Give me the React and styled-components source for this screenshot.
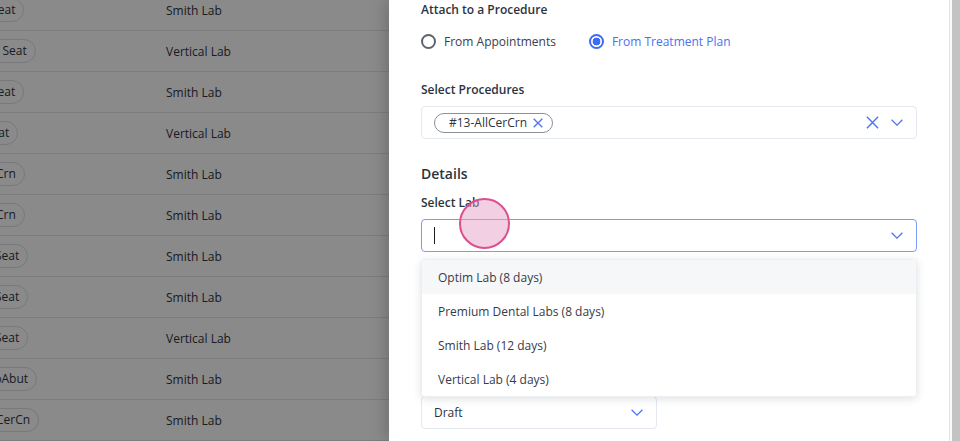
import { useEffect, useRef } from "react";
import styled, { createGlobalStyle } from "styled-components";

const GlobalStyle = createGlobalStyle`
  html, body {
    margin: 0;
    padding: 0;
  }
  body {
    font-family: "Open Sans", "Noto Sans", sans-serif;
    background: #ffffff;
    overflow: hidden;
  }
  * {
    box-sizing: border-box;
  }
`;

// rows of the lab cases table behind the drawer
const cases = [
  { proc: "#14-AllCerCn Seat", lab: "Smith Lab" },
  { proc: "#3-Post & Core Seat", lab: "Vertical Lab" },
  { proc: "#9-Onlay Pre Seat", lab: "Smith Lab" },
  { proc: "#3-Inlay Pre Seat", lab: "Vertical Lab" },
  { proc: "#8-AllCeramic Crn", lab: "Smith Lab" },
  { proc: "#9-AllCeramic Crn", lab: "Smith Lab" },
  { proc: "#12-Crn Build Seat", lab: "Smith Lab" },
  { proc: "#14-Crn Build Seat", lab: "Smith Lab" },
  { proc: "#15-Crn Build Seat", lab: "Vertical Lab" },
  { proc: "#3-Implant ImpAbut", lab: "Smith Lab" },
  { proc: "#3-Ceramic AllCerCn", lab: "Smith Lab" },
  { proc: "#12-Crn Build Seat", lab: "Smith Lab" },
];

const labs = [
  "Optim Lab (8 days)",
  "Premium Dental Labs (8 days)",
  "Smith Lab (12 days)",
  "Vertical Lab (4 days)",
];

const Chevron = ({ size = 12 }) => (
  <svg width={size} height={size * 0.6} viewBox="0 0 12 7" fill="none">
    <path d="M0.6 0.6 L6 6 L11.4 0.6" stroke="#4f74f3" strokeWidth="1.3" />
  </svg>
);

const Cross = ({ size = 12, weight = 1.3 }) => (
  <svg width={size} height={size} viewBox="0 0 12 12" fill="none">
    <path d="M0.8 0.8 L11.2 11.2 M11.2 0.8 L0.8 11.2" stroke="#4f74f3" strokeWidth={weight} />
  </svg>
);

const LabCaseDrawer = () => {
  const tableRef = useRef(null);

  // the table behind is scrolled sideways, like in the app
  useEffect(() => {
    if (tableRef.current) tableRef.current.scrollLeft = 110;
  }, []);

  return (
    <Page>
      <TableScroll ref={tableRef}>
        <Rows>
          {cases.map((c, i) => (
            <Row key={i}>
              <ProcCell>
                <ProcPill>{c.proc}</ProcPill>
              </ProcCell>
              <LabCell>{c.lab}</LabCell>
            </Row>
          ))}
        </Rows>
      </TableScroll>

      <Backdrop />

      <Drawer>
        <DrawerBody>
          <FieldLabel>Attach to a Procedure</FieldLabel>
          <RadioRow>
            <RadioOption>
              <RadioDot />
              From Appointments
            </RadioOption>
            <RadioOption $checked>
              <RadioDot $checked />
              From Treatment Plan
            </RadioOption>
          </RadioRow>

          <FieldLabel>Select Procedures</FieldLabel>
          <SelectBox>
            <Chip>
              #13-AllCerCrn
              <Cross size={10} weight={1.6} />
            </Chip>
            <SelectIcons>
              <Cross size={13} />
              <Chevron />
            </SelectIcons>
          </SelectBox>

          <SectionTitle>Details</SectionTitle>
          <FieldLabel>Select Lab</FieldLabel>
          <LabField>
            <SelectBox $focused>
              <Caret />
              <SelectIcons>
                <Chevron />
              </SelectIcons>
            </SelectBox>
            <Menu>
              {labs.map((l, i) => (
                <MenuItem key={l} $active={i === 0}>
                  {l}
                </MenuItem>
              ))}
            </Menu>
          </LabField>

          <FieldLabel $gap={36}>Due Date</FieldLabel>
          <SelectBox />

          <FieldLabel $gap={25}>Status</FieldLabel>
          <SelectBox $half>
            <SelectValue>Draft</SelectValue>
            <SelectIcons>
              <Chevron />
            </SelectIcons>
          </SelectBox>
        </DrawerBody>
        <ScrollTrack>
          <ScrollThumb />
        </ScrollTrack>
      </Drawer>

      <TouchMark />
    </Page>
  );
};

const Page = styled.div`
  position: relative;
  width: 960px;
  height: 441px;
  overflow: hidden;
  font-size: 12px;
  color: #2c3340;
`;

const TableScroll = styled.div`
  width: 100%;
  height: 100%;
  overflow: hidden;
`;

const Rows = styled.div`
  margin-top: -10px;
  width: 1100px;
`;

const Row = styled.div`
  display: grid;
  grid-template-columns: 260px 1fr;
  align-items: center;
  height: 41px;
  border-bottom: 1px solid #e5e7ed;
`;

const ProcCell = styled.div`
  padding-left: 16px;
  display: flex;
`;

const ProcPill = styled.span`
  border: 1px solid #dcdfe6;
  border-radius: 12px;
  padding: 2px 8px;
  line-height: 18px;
  color: #2f3440;
  white-space: nowrap;
`;

const LabCell = styled.div`
  padding-left: 16px;
  color: #2f3440;
  font-size: 12px;
`;

const Backdrop = styled.div`
  position: absolute;
  inset: 0;
  background: rgba(0, 0, 0, 0.46);
`;

const Drawer = styled.div`
  position: absolute;
  top: 0;
  right: 0;
  bottom: 0;
  width: 571px;
  background: #ffffff;
  display: flex;
  box-shadow: -4px 0 14px rgba(0, 0, 0, 0.18);
`;

const DrawerBody = styled.div`
  flex: 1;
  padding: 1px 32px 0 32px;
  display: flex;
  flex-direction: column;
`;

const ScrollTrack = styled.div`
  width: 11px;
  border-left: 1px solid #e4e4e4;
  background: #fafafa;
  padding-left: 2px;
  display: flex;
`;

const ScrollThumb = styled.div`
  flex: 1;
  background: #c3c3c3;
`;

const FieldLabel = styled.div`
  font-weight: 600;
  font-size: 12px;
  line-height: 18px;
  color: #2c3340;
  margin-top: ${(p) => (p.$gap ? `${p.$gap}px` : "0")};
  margin-bottom: 7px;
`;

const SectionTitle = styled.div`
  font-weight: 600;
  font-size: 14px;
  line-height: 20px;
  color: #2c3340;
  margin-top: 25px;
  margin-bottom: 10px;
`;

const RadioRow = styled.div`
  display: flex;
  align-items: center;
  gap: 33px;
  height: 20px;
  margin-top: 5px;
  margin-bottom: 30px;
`;

const RadioOption = styled.label`
  display: flex;
  align-items: center;
  gap: 8px;
  font-size: 12px;
  color: ${(p) => (p.$checked ? "#4a70f2" : "#39404c")};
`;

const RadioDot = styled.span`
  width: 15px;
  height: 15px;
  border-radius: 50%;
  border: 2px solid ${(p) => (p.$checked ? "#3d6cf4" : "#5d6470")};
  background: ${(p) =>
    p.$checked ? "radial-gradient(circle, #3d6cf4 0 3.6px, #fff 4.2px)" : "#fff"};
`;

const SelectBox = styled.div`
  height: 33px;
  width: ${(p) => (p.$half ? "236px" : "100%")};
  border: 1px solid ${(p) => (p.$focused ? "#7b9bf7" : "#e4e8f0")};
  border-radius: 4px;
  display: flex;
  align-items: center;
  padding: 0 13px 0 12px;
  background: #fff;
`;

const SelectValue = styled.span`
  font-size: 12px;
  color: #2c3340;
`;

const SelectIcons = styled.div`
  margin-left: auto;
  display: flex;
  align-items: center;
  gap: 12px;
`;

const Chip = styled.span`
  display: inline-flex;
  align-items: center;
  gap: 6px;
  height: 20px;
  border: 1px solid #8a919d;
  border-radius: 10px;
  padding: 0 9px 0 14px;
  font-size: 12px;
  color: #2c3340;
`;

const Caret = styled.span`
  width: 1px;
  height: 17px;
  background: #1d1d1d;
`;

const LabField = styled.div`
  position: relative;
`;

const Menu = styled.div`
  position: absolute;
  top: calc(100% + 7px);
  left: 0;
  right: 0;
  background: #fff;
  border-radius: 4px;
  border: 1px solid #eceef2;
  box-shadow: 0 2px 8px rgba(30, 40, 60, 0.14);
  overflow: hidden;
  z-index: 2;
`;

const MenuItem = styled.div`
  height: 34px;
  display: flex;
  align-items: center;
  padding-left: 16px;
  font-size: 12px;
  color: #353c49;
  background: ${(p) => (p.$active ? "#f6f7f9" : "#fff")};
`;

const TouchMark = styled.div`
  position: absolute;
  left: 459px;
  top: 198px;
  width: 51px;
  height: 51px;
  border-radius: 50%;
  border: 2px solid #d9508b;
  background: rgba(232, 160, 200, 0.5);
`;

export default function App() {
  return (
    <>
      <GlobalStyle />
      <LabCaseDrawer />
    </>
  );
}
